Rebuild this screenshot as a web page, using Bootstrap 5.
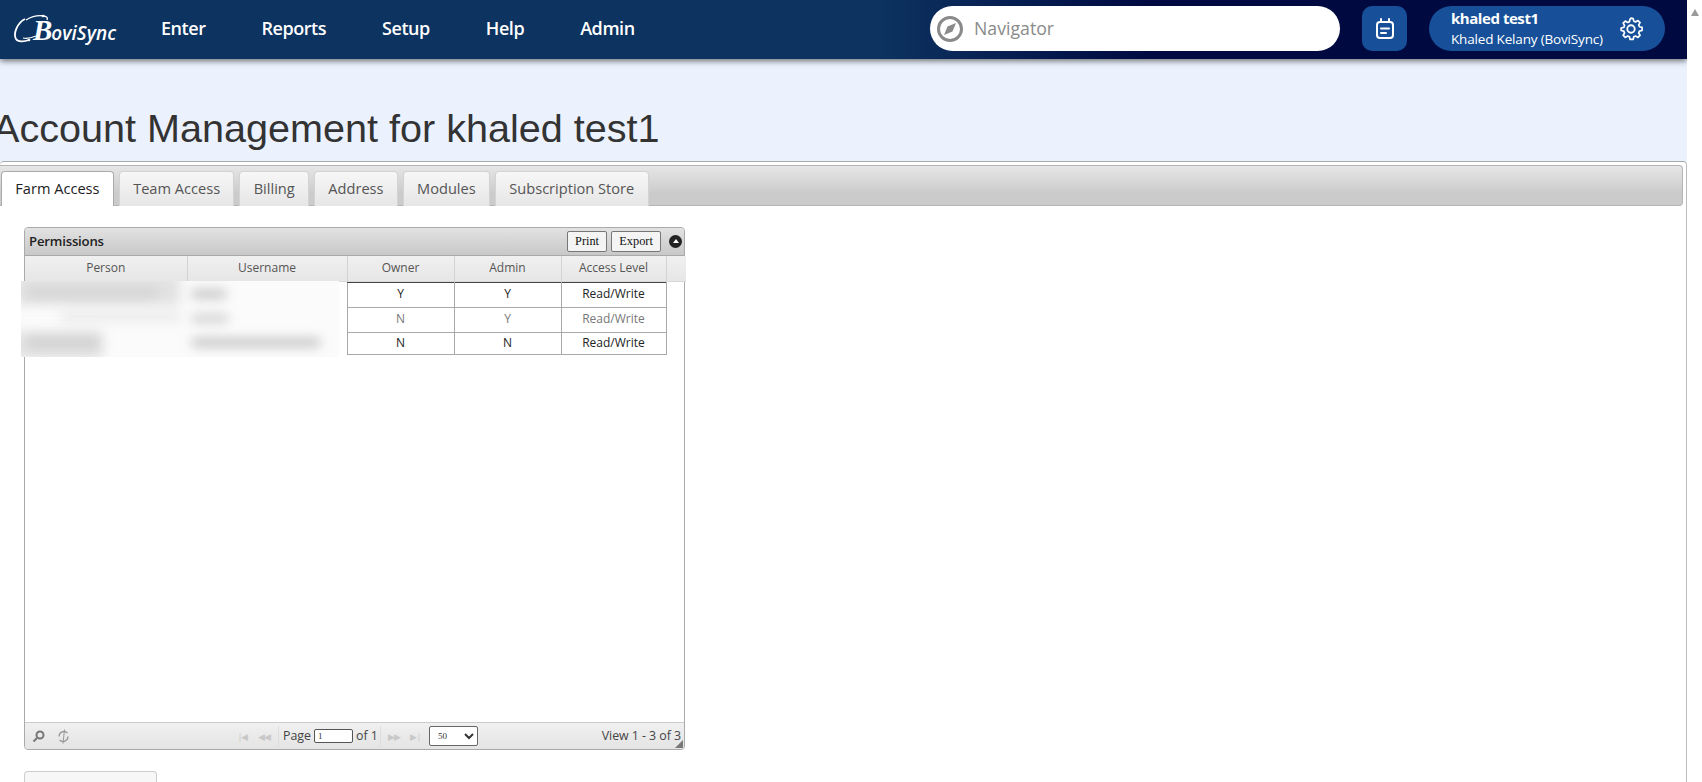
<!DOCTYPE html>
<html lang="en">
<head>
<meta charset="utf-8">
<title>Account Management</title>
<link href="https://cdn.jsdelivr.net/npm/bootstrap@5.3.0/dist/css/bootstrap.min.css" rel="stylesheet">
<style>
html,body{height:782px;overflow:hidden}
body{background:#fff;font-family:"Open Sans","Liberation Sans",sans-serif;color:#333}
.page-wrap{height:782px}
.page-main{width:1687px;flex:none;overflow:hidden;height:782px}
.fake-scroll{width:15px;flex:none;background:#fff;padding-top:9px}
.scroll-tri{width:0;height:0;margin:0 auto;border-left:4.5px solid transparent;border-right:4.5px solid transparent;border-bottom:7px solid #9a9a9a}
.top-bar{height:59px;padding:0 22px 2px 14px;background:linear-gradient(90deg,#0d3360 0,#0d3360 52%,#000a40 68%,#000a40 100%);box-shadow:0 2px 6px rgba(0,0,0,.55);position:relative;z-index:2;flex-wrap:nowrap}
.logo-box{width:102px;height:36px;color:#fff;position:relative;margin-right:45px;flex:none}
.logo-box svg{position:absolute;left:0;top:0}
.logo-text{position:absolute;left:19px;top:5px;white-space:nowrap;font-style:italic;font-weight:600;line-height:28px;font-size:19px;letter-spacing:.05px}
.logo-b{font-family:"Liberation Serif",serif;font-weight:700;font-size:29px;letter-spacing:-1px}
.top-links{gap:56px}
.top-links a{color:#fff;font-weight:600;font-size:18px;text-decoration:none;padding:0;letter-spacing:-.45px}
.nav-search{width:410px;height:45px;background:#fff;border-radius:23px;margin-left:auto;padding-left:6px;color:#8a8a8a;font-size:17.7px;gap:10px}
.cal-btn{width:45px;height:45px;background:#175099;border-radius:10px;margin-left:22px;flex:none}
.user-pill{width:236px;height:45px;background:#175099;border-radius:23px;margin-left:22px;padding:0 20px 0 22px;color:#fff;flex:none}
.user-name{font-weight:700;font-size:15px;line-height:18px;letter-spacing:-.45px;margin-top:-1px}
.user-org{font-size:13.5px;line-height:18px;margin-top:3px;letter-spacing:-.17px}
.title-band{height:103px;background:#ebf2fe;position:relative}
.page-title{font-family:"Liberation Sans",sans-serif;font-weight:400;font-size:39.6px;line-height:48px;color:#333;margin:0 0 0 -7px;padding-top:45px;white-space:nowrap}
.tab-shell{height:700px;border:1px solid #aaa;border-left:0;border-right-color:#bbb;border-radius:4px 4px 0 0;padding:3px 3px 0 0;margin-top:-1px;background:#fff;position:relative}
.tab-bar{height:41px;background:linear-gradient(#e6e6e6,#cbcbcb 70%,#cbcbcb);border:1px solid #b5b5b5;border-left:0;border-radius:0 4px 4px 0;padding:5px 0 0 1px;gap:5px;flex-wrap:nowrap;margin:0}
.tab-bar .nav-link{height:35px;padding:0 13.3px;line-height:33px;font-size:14.6px;color:#555;background:linear-gradient(#f7f7f7,#e6e6e6);border:1px solid #d3d3d3;border-bottom:0;border-radius:4px 4px 0 0}
.tab-bar .nav-link.active{background:#fff;color:#222;border-color:#aaa}
.tab-pane-area{padding:21px 0 0 24px}
.perm-grid{width:661px;height:523px;border:1px solid #aaa;border-radius:4px;position:relative;background:#fff}
.grid-title{height:28px;background:linear-gradient(#e2e2e2,#c8c8c8);border-bottom:1px solid #a8a8a8;border-radius:4px 4px 0 0;padding:0 0 0 4px}
.grid-title b{font-weight:600;font-size:13.2px;color:#222;letter-spacing:-.2px}
.mini-btn{font-family:"Liberation Serif",serif;font-size:12.3px;line-height:19px;height:21px;padding:0 7.2px;border:1px solid #777;border-radius:2px;background:#f4f4f4;color:#111;margin-left:4px}
.collapse-dot{width:13px;height:13px;border-radius:50%;background:#222;margin:0 2px 0 8px;position:relative;flex:none}
.collapse-dot::after{content:"";position:absolute;left:3.5px;top:3.5px;border-left:3px solid transparent;border-right:3px solid transparent;border-bottom:4px solid #fff}
.grid-table{table-layout:fixed;width:661px;border-collapse:collapse;margin:0;font-size:12px}
.c-person{width:162px}.c-user{width:160px}.c-flag{width:107px}.c-level{width:105px}
.grid-head th{height:25px;padding:0;background:linear-gradient(#f0f0f0,#e6e6e6);font-weight:400;color:#555;text-align:center;border-right:1px solid #d3d3d3;border-bottom:1px solid #d8d8d8}
.grid-head th:last-child{border-right:0}
.grid-rows td{padding:0 0 2px;text-align:center;color:#222;border:1px solid #a9a9a9}
.grid-rows tr:nth-child(1) td{border-top-color:#444;height:25px}
.grid-rows tr:nth-child(2) td{height:25px}
.grid-rows tr:nth-child(3) td{height:22px;padding:0}
.grid-rows tr.muted-row td{color:#777}
.grid-rows td.no-line{border:0;color:transparent}
.grid-rows td.tail{border:0}
.blur-patch{position:absolute;left:-4px;top:53px;width:318px;height:76px;background:#fbfbfb;overflow:hidden}
.blur-bar{position:absolute;background:#a8a8a8;filter:blur(6px)}
.bb1{left:-6px;top:-6px;width:165px;height:30px;opacity:.3}
.bb2{left:-6px;top:50px;width:88px;height:28px;opacity:.3}
.bb3{left:6px;top:7px;width:130px;height:10px;opacity:.25}
.bb4{left:40px;top:31px;width:120px;height:10px;opacity:.2}
.bb5{left:6px;top:57px;width:72px;height:9px;opacity:.35}
.bb6{left:171px;top:9px;width:34px;height:8px;opacity:.75}
.bb7{left:171px;top:34px;width:36px;height:7px;opacity:.65}
.bb8{left:171px;top:58px;width:128px;height:7px;opacity:.85}
.grid-foot{position:absolute;left:0;right:0;bottom:0;height:27px;border-top:1px solid #ccc;background:linear-gradient(#f0f0f0,#e4e4e4);border-radius:0 0 4px 4px;font-size:12.4px;color:#444;padding:0 4px 0 7px}
.foot-icon{flex:none}
.foot-gap{margin-left:12px}
.pg-center{position:absolute;left:207px;top:0;height:26px;gap:0}
.pg-sep{width:1px;height:21px;background:#ddd;margin:0 4px}
.pg-sep-tight{margin:0 3px 0 2px}
.pg-input{width:39px;height:14px;border:1px solid #555;border-radius:2px;font-family:"Liberation Serif",serif;font-size:9px;padding:0 3px;line-height:12px;margin:0 3px;background:#fff;color:#333}
.pg-select{width:49px;height:20px;border:1px solid #666;border-radius:2px;background:#fff;font-family:"Liberation Serif",serif;font-size:9px;padding:0 6px 0 4px;margin-left:3px;color:#333}
.pg-tri{color:#c8c8c8;font-size:9px;width:21px;text-align:center;letter-spacing:-1px;line-height:1}
.view-txt{position:absolute;right:3px;top:5px;line-height:16px;white-space:nowrap;letter-spacing:-.05px}
.resize-grip{position:absolute;right:1px;bottom:1px;width:0;height:0;border-left:8px solid transparent;border-bottom:8px solid #777}
.stub-box{width:133px;height:20px;margin-top:21px;border:1px solid #ccc;border-bottom:0;border-radius:4px 4px 0 0;background:#f7f7f7}
</style>
</head>
<body>
<div class="page-wrap d-flex">
<div class="page-main">
  <nav class="top-bar d-flex align-items-center">
    <div class="logo-box">
      <svg width="60" height="36" viewBox="0 0 60 36" fill="none" stroke="#fff">
        <path d="M11 8C3 12-1 23 2 28c2 3 8 3 13 1" stroke-width="1.8"/>
        <path d="M12 9c5-3 12-5 18-4 3 .5 4 2 3 4" stroke-width="1.3"/>
        <path d="M9 27c4 1 8 0 13-2" stroke-width="1.1"/>
        <circle cx="29" cy="5" r="1.3" fill="#fff" stroke="none"/>
        <circle cx="15" cy="29" r="1.3" fill="#fff" stroke="none"/>
      </svg>
      <span class="logo-text"><span class="logo-b">B</span>oviSync</span>
    </div>
    <div class="nav top-links flex-nowrap">
      <a class="nav-link" href="#">Enter</a>
      <a class="nav-link" href="#">Reports</a>
      <a class="nav-link" href="#">Setup</a>
      <a class="nav-link" href="#">Help</a>
      <a class="nav-link" href="#">Admin</a>
    </div>
    <div class="nav-search d-flex align-items-center">
      <svg width="28" height="28" viewBox="0 0 28 28"><circle cx="14" cy="14" r="11.5" fill="none" stroke="#8a8a8a" stroke-width="3"/><path d="M20 8l-3.500 8.500L8 20l3.500-8.500z" fill="#8a8a8a"/></svg>
      <span>Navigator</span>
    </div>
    <div class="cal-btn d-flex align-items-center justify-content-center">
      <svg width="22" height="24" viewBox="0 0 22 24" fill="none" stroke="#fff" stroke-width="2" stroke-linecap="round"><rect x="3" y="5" width="16" height="16" rx="3"/><path d="M7 2v3M15 2v3M7 11.500h8M7 16h5"/></svg>
    </div>
    <div class="user-pill d-flex align-items-center justify-content-between">
      <div>
        <div class="user-name">khaled test1</div>
        <div class="user-org text-nowrap">Khaled Kelany (BoviSync)</div>
      </div>
      <svg width="28" height="28" viewBox="0 0 24 24" fill="none" stroke="#fff" stroke-width="1.6" stroke-linejoin="round"><path d="M12 1.800l2 .3.6 2.500 1.700.7 2.200-1.300 2 2-1.300 2.200.7 1.700 2.500.6v2.900l-2.500.6-.7 1.700 1.300 2.200-2 2-2.200-1.300-1.700.7-.6 2.500h-2.900l-.6-2.500-1.700-.7-2.200 1.300-2-2 1.300-2.200-.7-1.700-2.500-.6V11l2.500-.6.7-1.700-1.300-2.200 2-2 2.200 1.300 1.700-.7.6-2.500z" transform="translate(1.100 1.100) scale(.91)"/><circle cx="12" cy="12" r="3.200"/></svg>
    </div>
  </nav>
  <div class="title-band">
    <h1 class="page-title">Account Management for khaled test1</h1>
  </div>
  <div class="tab-shell">
    <ul class="nav tab-bar">
      <li class="nav-item"><a class="nav-link active" href="#">Farm Access</a></li>
      <li class="nav-item"><a class="nav-link" href="#">Team Access</a></li>
      <li class="nav-item"><a class="nav-link" href="#">Billing</a></li>
      <li class="nav-item"><a class="nav-link" href="#">Address</a></li>
      <li class="nav-item"><a class="nav-link" href="#">Modules</a></li>
      <li class="nav-item"><a class="nav-link" href="#">Subscription Store</a></li>
    </ul>
    <div class="tab-pane-area">
      <div class="perm-grid">
        <div class="grid-title d-flex align-items-center">
          <b class="me-auto">Permissions</b>
          <button class="mini-btn" type="button">Print</button>
          <button class="mini-btn" type="button">Export</button>
          <span class="collapse-dot"></span>
        </div>
        <table class="grid-table grid-head">
          <colgroup><col class="c-person"><col class="c-user"><col class="c-flag"><col class="c-flag"><col class="c-level"><col></colgroup>
          <tr><th>Person</th><th>Username</th><th>Owner</th><th>Admin</th><th>Access Level</th><th></th></tr>
        </table>
        <table class="grid-table grid-rows">
          <colgroup><col class="c-person"><col class="c-user"><col class="c-flag"><col class="c-flag"><col class="c-level"><col></colgroup>
          <tr><td class="no-line"></td><td class="no-line"></td><td>Y</td><td>Y</td><td>Read/Write</td><td class="tail"></td></tr>
          <tr class="muted-row"><td class="no-line"></td><td class="no-line"></td><td>N</td><td>Y</td><td>Read/Write</td><td class="tail"></td></tr>
          <tr><td class="no-line"></td><td class="no-line"></td><td>N</td><td>N</td><td>Read/Write</td><td class="tail"></td></tr>
        </table>
        <div class="blur-patch" aria-hidden="true">
          <i class="blur-bar bb1"></i><i class="blur-bar bb2"></i><i class="blur-bar bb3"></i><i class="blur-bar bb4"></i>
          <i class="blur-bar bb5"></i><i class="blur-bar bb6"></i><i class="blur-bar bb7"></i><i class="blur-bar bb8"></i>
        </div>
        <div class="grid-foot d-flex align-items-center">
          <svg class="foot-icon" width="13" height="13" viewBox="0 0 13 13" fill="none" stroke="#777" stroke-width="2"><circle cx="8" cy="5" r="3.5"/><path d="M5 8 1.500 11.500"/></svg>
          <svg class="foot-icon foot-gap" width="13" height="15" viewBox="0 0 13 15" fill="none" stroke="#999" stroke-width="1.3"><path d="M10.500 4A5 5 0 0 0 2 7.500M2.500 11A5 5 0 0 0 11 7.500"/><path d="M7.500 0.500 6 14.500" stroke-width="1"/></svg>
          <div class="pg-center d-flex align-items-center">
            <span class="pg-tri">|◀</span><span class="pg-tri">◀◀</span>
            <span class="pg-sep"></span>
            <span>Page</span><input class="pg-input" value="1" aria-label="Page"><span>of 1</span>
            <span class="pg-sep pg-sep-tight"></span>
            <span class="pg-tri">▶▶</span><span class="pg-tri">▶|</span>
            <select class="pg-select" aria-label="Rows"><option>50</option></select>
          </div>
          <span class="view-txt">View 1 - 3 of 3</span>
          <span class="resize-grip"></span>
        </div>
      </div>
      <div class="stub-box"></div>
    </div>
  </div>
</div>
<div class="fake-scroll"><div class="scroll-tri"></div></div>
</div>
<script src="https://cdn.jsdelivr.net/npm/bootstrap@5.3.0/dist/js/bootstrap.bundle.min.js"></script>
</body>
</html>
